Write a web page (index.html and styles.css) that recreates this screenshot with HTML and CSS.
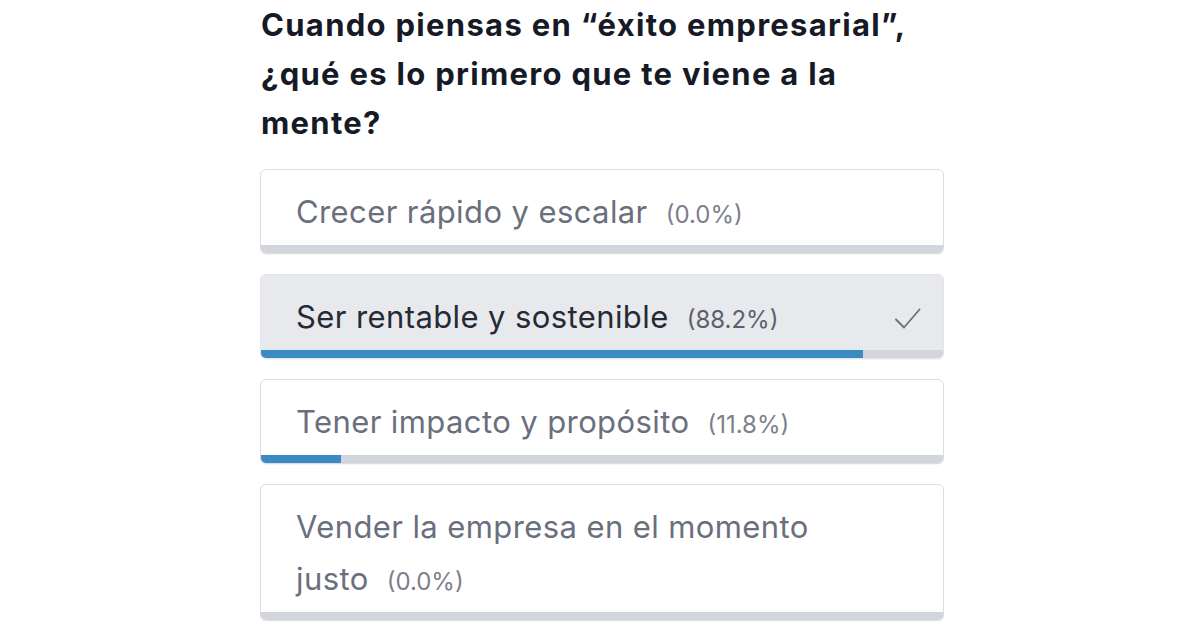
FILE: index.html
```html
<!DOCTYPE html>
<html lang="es">
<head>
<meta charset="utf-8">
<title>Encuesta</title>
<link rel="stylesheet" href="styles.css">
</head>
<body>
<main class="poll">
  <h1 class="question">Cuando piensas en “éxito empresarial”, ¿qué es lo primero que te viene a la mente?</h1>
  <ul class="options">
    <li class="option">
      <div class="label"><span class="text">Crecer rápido y escalar</span><span class="pct">(0.0%)</span></div>
      <div class="track"><div class="fill" style="width:0%"></div></div>
    </li>
    <li class="option selected">
      <div class="label"><span class="text">Ser rentable y sostenible</span><span class="pct">(88.2%)</span>
        <svg class="check" viewBox="0 0 26 24" width="26" height="24"><path d="M1 12.5 L9 20.5 L24.5 2.5" fill="none" stroke="#6e7079" stroke-width="1.8" stroke-linecap="round" stroke-linejoin="round"/></svg>
      </div>
      <div class="track"><div class="fill" style="width:88.2%"></div></div>
    </li>
    <li class="option">
      <div class="label"><span class="text">Tener impacto y propósito</span><span class="pct">(11.8%)</span></div>
      <div class="track"><div class="fill" style="width:11.8%"></div></div>
    </li>
    <li class="option">
      <div class="label"><span class="text">Vender la empresa en el momento justo</span><span class="pct">(0.0%)</span></div>
      <div class="track"><div class="fill" style="width:0%"></div></div>
    </li>
  </ul>
</main>
</body>
</html>
```
FILE: styles.css
```css
html, body {
  margin: 0;
  padding: 0;
  background: #ffffff;
}

.poll {
  width: 684px;
  margin-left: 260px;
  font-family: Inter, "Liberation Sans", sans-serif;
}

.question {
  margin: 0;
  width: 670px;
  padding: 0 0 0 1px;
  font-weight: 700;
  font-size: 31px;
  line-height: 49px;
  color: #161a26;
  letter-spacing: 1.3px;
}

.options {
  list-style: none;
  margin: 22px 0 0;
  padding: 0;
  display: flex;
  flex-direction: column;
  gap: 20px;
}

.option {
  border: 1px solid #dcdde2;
  border-radius: 6px;
  overflow: hidden;
  background: #ffffff;
  box-shadow: 0 1px 1px rgba(0, 0, 0, 0.04);
}

.option.selected {
  background: #e8e9ed;
  border-color: #e4e5e9;
}

.label {
  position: relative;
  padding: 16px 120px 7px 35px;
  font-size: 31px;
  line-height: 52px;
  letter-spacing: 0.4px;
  color: #6b6f7d;
}

.selected .label {
  color: #262a35;
}

.pct {
  margin-left: 18px;
  font-size: 24px;
  line-height: 24px;
  letter-spacing: 0;
  color: #7d808b;
}

.selected .pct {
  color: #5d606b;
}

.check {
  position: absolute;
  right: 22px;
  top: 32px;
}

.track {
  height: 8px;
  background: #d3d5dc;
}

.fill {
  height: 100%;
  background: #3a8bc1;
}
```
